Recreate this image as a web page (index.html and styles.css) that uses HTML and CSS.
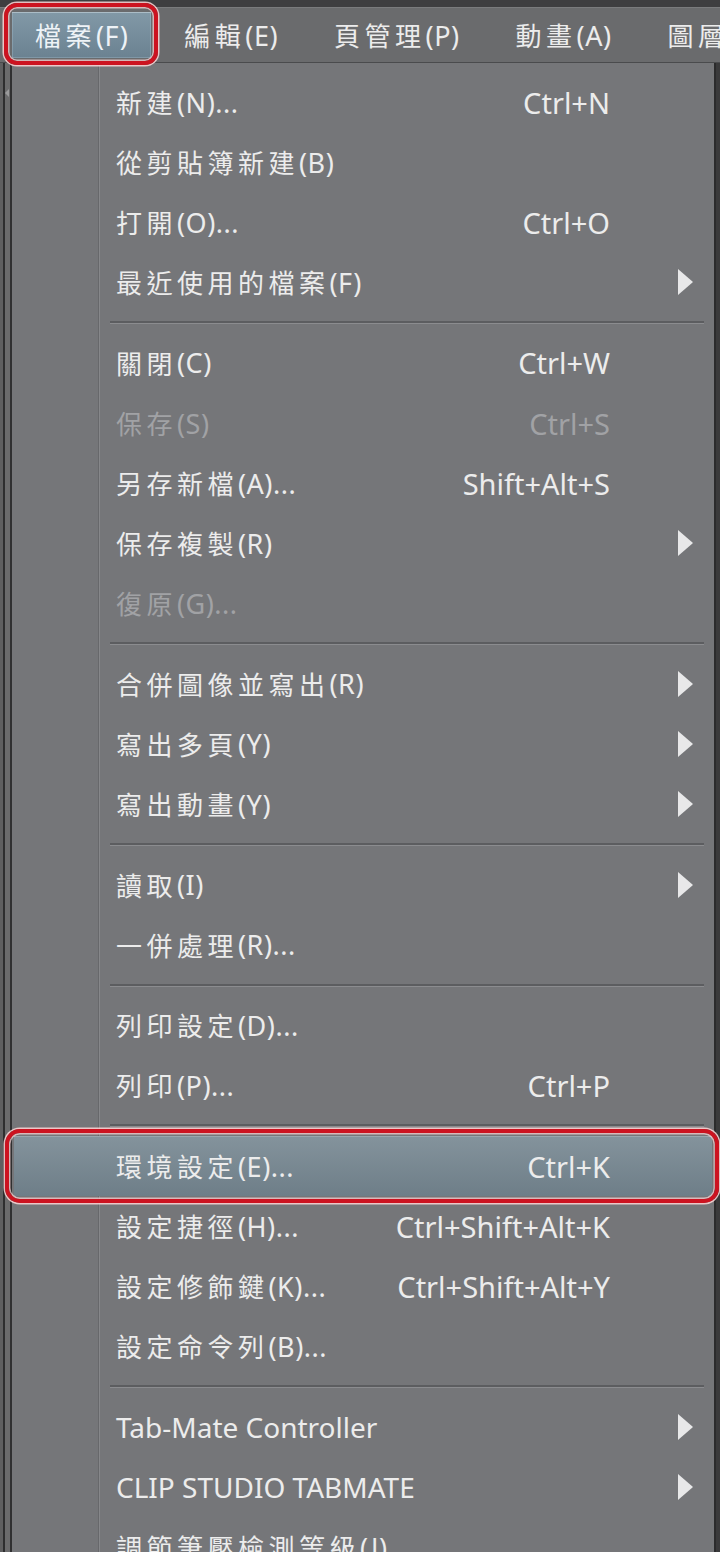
FILE: index.html
```html
<!DOCTYPE html>
<html lang="zh-Hant">
<head>
<meta charset="utf-8">
<title>檔案選單</title>
<link rel="stylesheet" href="styles.css">
</head>
<body>
<div class="topstrip"></div>
<nav class="menubar">
  <div class="mb-item open"><span class="t">檔案</span><span class="k">(F)</span></div>
  <div class="mb-item"><span class="t">編輯</span><span class="k">(E)</span></div>
  <div class="mb-item"><span class="t">頁管理</span><span class="k">(P)</span></div>
  <div class="mb-item"><span class="t">動畫</span><span class="k">(A)</span></div>
  <div class="mb-item"><span class="t">圖層</span><span class="k">(L)</span></div>
</nav>
<div class="workspace">
  <div class="sidestrip"><span class="tiny-arrow"></span></div>
  <div class="dropdown">
    <div class="item"><span class="label"><span class="t">新建</span><span class="k">(N)...</span></span><span class="sc">Ctrl+N</span><span class="sub"></span></div>
    <div class="item"><span class="label"><span class="t">從剪貼簿新建</span><span class="k">(B)</span></span><span class="sc"></span><span class="sub"></span></div>
    <div class="item"><span class="label"><span class="t">打開</span><span class="k">(O)...</span></span><span class="sc">Ctrl+O</span><span class="sub"></span></div>
    <div class="item"><span class="label"><span class="t">最近使用的檔案</span><span class="k">(F)</span></span><span class="sc"></span><span class="sub"><i class="tri"></i></span></div>
    <div class="sep"></div>
    <div class="item"><span class="label"><span class="t">關閉</span><span class="k">(C)</span></span><span class="sc">Ctrl+W</span><span class="sub"></span></div>
    <div class="item disabled"><span class="label"><span class="t">保存</span><span class="k">(S)</span></span><span class="sc">Ctrl+S</span><span class="sub"></span></div>
    <div class="item"><span class="label"><span class="t">另存新檔</span><span class="k">(A)...</span></span><span class="sc">Shift+Alt+S</span><span class="sub"></span></div>
    <div class="item"><span class="label"><span class="t">保存複製</span><span class="k">(R)</span></span><span class="sc"></span><span class="sub"><i class="tri"></i></span></div>
    <div class="item disabled"><span class="label"><span class="t">復原</span><span class="k">(G)...</span></span><span class="sc"></span><span class="sub"></span></div>
    <div class="sep"></div>
    <div class="item"><span class="label"><span class="t">合併圖像並寫出</span><span class="k">(R)</span></span><span class="sc"></span><span class="sub"><i class="tri"></i></span></div>
    <div class="item"><span class="label"><span class="t">寫出多頁</span><span class="k">(Y)</span></span><span class="sc"></span><span class="sub"><i class="tri"></i></span></div>
    <div class="item"><span class="label"><span class="t">寫出動畫</span><span class="k">(Y)</span></span><span class="sc"></span><span class="sub"><i class="tri"></i></span></div>
    <div class="sep"></div>
    <div class="item"><span class="label"><span class="t">讀取</span><span class="k">(I)</span></span><span class="sc"></span><span class="sub"><i class="tri"></i></span></div>
    <div class="item"><span class="label"><span class="t">一併處理</span><span class="k">(R)...</span></span><span class="sc"></span><span class="sub"></span></div>
    <div class="sep"></div>
    <div class="item"><span class="label"><span class="t">列印設定</span><span class="k">(D)...</span></span><span class="sc"></span><span class="sub"></span></div>
    <div class="item"><span class="label"><span class="t">列印</span><span class="k">(P)...</span></span><span class="sc">Ctrl+P</span><span class="sub"></span></div>
    <div class="sep"></div>
    <div class="item active"><span class="label"><span class="t">環境設定</span><span class="k">(E)...</span></span><span class="sc">Ctrl+K</span><span class="sub"></span></div>
    <div class="item"><span class="label"><span class="t">設定捷徑</span><span class="k">(H)...</span></span><span class="sc">Ctrl+Shift+Alt+K</span><span class="sub"></span></div>
    <div class="item"><span class="label"><span class="t">設定修飾鍵</span><span class="k">(K)...</span></span><span class="sc">Ctrl+Shift+Alt+Y</span><span class="sub"></span></div>
    <div class="item"><span class="label"><span class="t">設定命令列</span><span class="k">(B)...</span></span><span class="sc"></span><span class="sub"></span></div>
    <div class="sep"></div>
    <div class="item"><span class="label"><span class="lat">Tab-Mate Controller</span></span><span class="sc"></span><span class="sub"><i class="tri"></i></span></div>
    <div class="item"><span class="label"><span class="lat">CLIP STUDIO TABMATE</span></span><span class="sc"></span><span class="sub"><i class="tri"></i></span></div>
    <div class="item"><span class="label"><span class="t">調節筆壓檢測等級</span><span class="k">(J)...</span></span><span class="sc"></span><span class="sub"></span></div>
  </div>
  <div class="rightstrip"></div>
</div>
</body>
</html>
```

FILE: styles.css
```css
html, body {
  margin: 0;
  padding: 0;
}
body {
  width: 720px;
  height: 1552px;
  overflow: hidden;
  background: #3a3a3b;
  font-family: "Noto Sans", "Noto Sans CJK TC", sans-serif;
  color: #ececec;
}
.topstrip {
  height: 8px;
  background: #3e3e40;
  border-bottom: 1px solid #7a7b7d;
  box-sizing: border-box;
}
.menubar {
  position: relative;
  height: 55px;
  background: #6a6b6d;
  display: flex;
  align-items: center;
  gap: 10px;
  padding-left: 12px;
  box-sizing: border-box;
  border-bottom: 1px solid #4a4b4d;
  white-space: nowrap;
}
.mb-item {
  position: relative;
  height: 46px;
  display: flex;
  align-items: center;
  padding: 0 23px;
  flex-shrink: 0;
}
.t {
  font-family: "Noto Sans CJK TC", sans-serif;
  font-size: 26px;
  letter-spacing: 4.5px;
  line-height: 1;
}
.k {
  font-family: "Noto Sans", sans-serif;
  font-size: 27px;
  letter-spacing: 0.5px;
  line-height: 1;
}
.lat {
  font-family: "Noto Sans", sans-serif;
  font-size: 28px;
  line-height: 1;
}
.mb-item.open {
  background: linear-gradient(#8299a7, #6b8291);
  box-shadow: inset 0 1px 0 rgba(255, 255, 255, 0.25), inset 0 0 0 1px rgba(170, 195, 210, 0.35);
  color: #eef3f7;
}
.mb-item.open::after,
.item.active::after {
  content: "";
  position: absolute;
  border: 4px solid #cc1320;
  box-shadow: 0 0 0 1.5px rgba(255, 215, 215, 0.85), inset 0 0 0 1.5px rgba(255, 215, 215, 0.7);
  pointer-events: none;
  z-index: 2;
}
.mb-item.open::after {
  top: -9px;
  bottom: -7px;
  left: -8px;
  right: -7px;
  border-radius: 13px;
}
.workspace {
  display: flex;
  align-items: flex-start;
}
.sidestrip {
  position: relative;
  width: 12px;
  height: 1489px;
  flex-shrink: 0;
  background: linear-gradient(to right, #5f5f60 0 3px, #2e2e2f 3px 5px, #6b6b6c 5px 10px, #303031 10px 12px);
}
.tiny-arrow {
  position: absolute;
  left: 5px;
  top: 26px;
  width: 0;
  height: 0;
  border-right: 4px solid #9a9a9b;
  border-top: 4px solid transparent;
  border-bottom: 4px solid transparent;
}
.dropdown {
  width: 702px;
  flex-shrink: 0;
  padding-top: 9px;
  background:
    linear-gradient(to right, transparent 86px, #67686b 86px 87px, #86878a 87px 88px, transparent 88px),
    #757679;
  border-right: 2px solid #2b2b2c;
}
.rightstrip {
  width: 4px;
  height: 1489px;
  background: #3a3a3b;
}
.item {
  position: relative;
  height: 60.1px;
  display: flex;
  align-items: center;
  padding: 0 21px 0 104px;
  white-space: nowrap;
}
.item .label {
  flex: 1;
  display: flex;
  align-items: center;
}
.item .sc {
  font-family: "Noto Sans", sans-serif;
  font-size: 29px;
  line-height: 1;
}
.item .sub {
  width: 83px;
  display: flex;
  justify-content: flex-end;
  align-items: center;
}
.tri {
  display: block;
  width: 0;
  height: 0;
  border-left: 15px solid #e8e8e9;
  border-top: 13px solid transparent;
  border-bottom: 13px solid transparent;
}
.item.disabled {
  color: #a1a2a5;
}
.item.active {
  margin: 0 2px 0 2px;
  padding: 0 19px 0 102px;
  background: linear-gradient(#84939c, #6e7e88);
  box-shadow: inset 0 1px 0 rgba(255, 255, 255, 0.18);
}
.item.active::after {
  top: -7px;
  bottom: -7px;
  left: -9px;
  right: -7px;
  border-radius: 15px;
}
.sep {
  height: 20.5px;
  display: flex;
  align-items: center;
  padding: 0 10px 0 98px;
}
.sep::before {
  content: "";
  flex: 1;
  height: 2px;
  background: #5c5d60;
  border-bottom: 1px solid #8b8c8f;
}
```
